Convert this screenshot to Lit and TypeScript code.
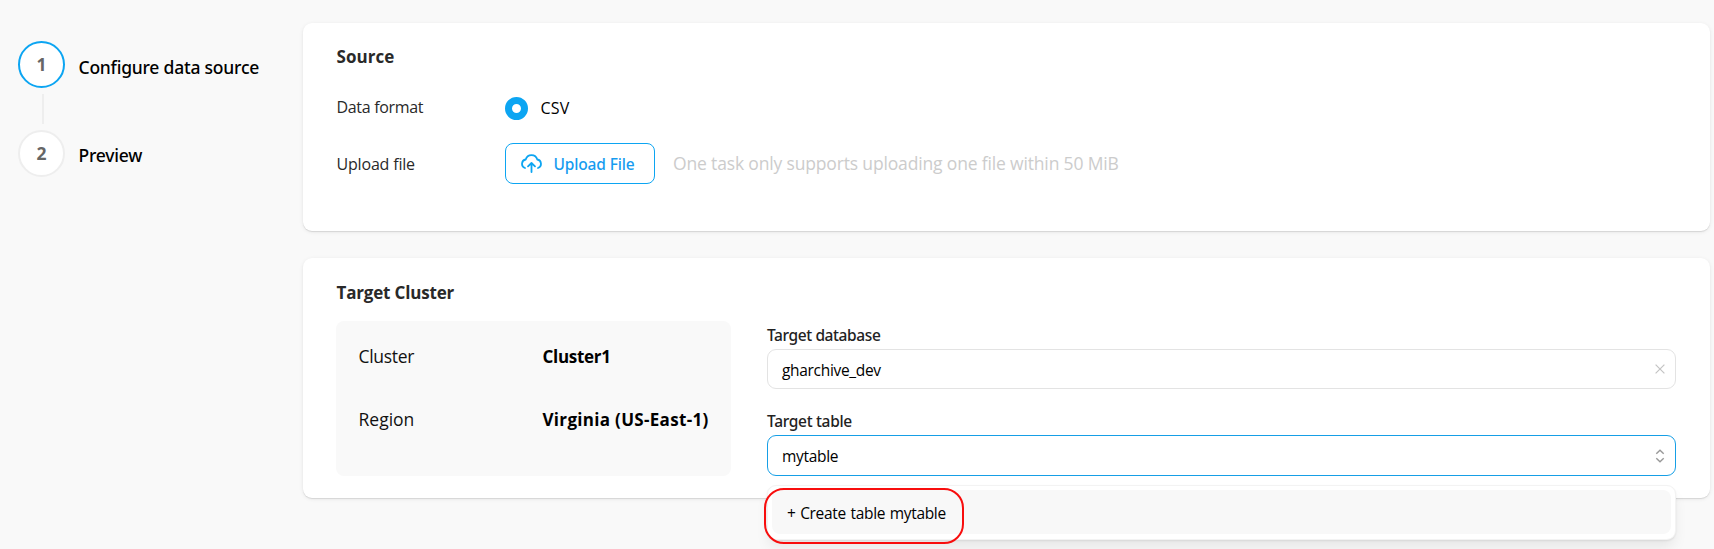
import { LitElement, html, css } from "lit";
import { customElement } from "lit/decorators.js";

@customElement("app-root")
export class AppRoot extends LitElement {
  static styles = css`
    * { box-sizing: border-box; }
    :host {
      display: flex;
      height: 549px;
      overflow: hidden;
      background: #f9f9f9;
      color: #000;
      font-family: "Open Sans", "Noto Sans", sans-serif;
      font-size: 16px;
      line-height: 24px;
      white-space: nowrap;
    }
    svg { display: block; flex: none; }

    .steps { width: 303px; flex: none; padding: 41px 0 0 18px; }
    .step { display: flex; align-items: center; height: 47px; font: 500 17.5px/24px "Noto Sans", sans-serif; }
    .step .label { padding: 5px 0 0 13.5px; letter-spacing: -0.22px; }
    .step.next .label { padding-top: 3px; }
    .num {
      width: 47px; height: 47px; flex: none; border: 2px solid #eee; border-radius: 50%;
      background: #fff; color: #666; display: grid; place-items: center; padding-bottom: 1px;
      font: 700 17.5px/24px "Open Sans", sans-serif;
    }
    .step.active .num { border-color: #0ca5f2; }
    .line { width: 2px; height: 30px; margin: 6px 0 6px 24px; background: #eee; }

    .main { width: 1407px; flex: none; padding-top: 23px; }
    .card {
      background: #fff; border-radius: 9px; padding: 0 34px 0 33px;
      box-shadow: 0 1px 1px rgba(0, 0, 0, 0.1), 0 1px 4px rgba(0, 0, 0, 0.08);
    }
    .source { height: 208px; margin-bottom: 27px; padding-top: 22px; }
    .target { height: 240px; padding-top: 23px; }
    .title { font-size: 17px; font-weight: 700; color: #292929; padding-left: 0.5px; }
    .title.src { letter-spacing: 0.05px; }
    .title.tgt { letter-spacing: -0.18px; }

    .row { display: flex; align-items: center; }
    .row .name { width: 169px; color: #292929; padding-left: 0.5px; }
    .format { height: 24px; margin-top: 27px; }
    .format .name { letter-spacing: -0.32px; margin-top: -2px; }
    .radio { width: 23px; height: 23px; border: 7px solid #0ca5f2; border-radius: 50%; background: #fff; }
    .csv { margin-left: 12.5px; letter-spacing: 0.2px; }
    .upload { height: 41px; margin-top: 23px; }
    .upload .name { letter-spacing: -0.18px; padding-top: 1px; }
    .btn {
      width: 150px; height: 41px; border: 1px solid #0ca5f2; border-radius: 8px;
      display: flex; align-items: center; padding-left: 14.5px; color: #169cf0;
      font: 500 15.5px/24px "Noto Sans", sans-serif; letter-spacing: -0.15px;
    }
    .btn svg { margin-top: -1px; }
    .btn span { margin: 1px 0 0 12px; }
    .hint { margin-left: 18px; color: #ccc; font-size: 17.5px; letter-spacing: -0.16px; margin-top: -1px; }

    .cols { display: flex; margin-top: 16px; }
    .info {
      width: 395px; height: 155px; flex: none; border-radius: 8px; background: #f9f9f9;
      padding: 23px 0 0 22.5px; font-size: 17.5px;
    }
    .pair { display: flex; height: 24px; margin-bottom: 39px; }
    .pair .key { width: 184px; color: #111; }
    .pair .key.c { letter-spacing: -0.3px; }
    .pair b { font-weight: 700; font-size: 17px; padding-top: 1px; }
    .pair b.c { letter-spacing: -0.3px; }
    .pair b.r { letter-spacing: 0.31px; }

    .form { width: 909px; margin-left: 36px; padding-top: 4px; position: relative; }
    .lab { font: 500 15.5px/20px "Noto Sans", sans-serif; height: 24px; color: #222; letter-spacing: -0.4px; }
    .lab.t { letter-spacing: -0.32px; margin-top: 22px; }
    .input {
      height: 40px; border: 1px solid #e3e3e3; border-radius: 9px; background: #fff;
      display: flex; align-items: center; justify-content: space-between;
      font-size: 15.5px; padding: 2px 10.5px 0 14px; letter-spacing: -0.32px;
    }
    .input svg { margin-top: -2px; }
    .input.focus { height: 41px; border-color: #169fe6; padding-top: 0; letter-spacing: -0.3px; }
    .input.focus svg { margin-top: 0; }
    .menu {
      position: absolute; left: 0; top: 164px; width: 909px; height: 55px;
      border: 1px solid #f3f3f3; border-radius: 9px; background: #fff; padding: 4px;
      box-shadow: 0 1px 2px rgba(0, 0, 0, 0.08), 0 9px 14px -2px rgba(0, 0, 0, 0.08);
    }
    .option {
      height: 44px; border-radius: 8px; background: #f8f8f8; padding: 11px 0 0 15px;
      font-size: 15.5px; letter-spacing: -0.32px; word-spacing: 0.9px;
    }
    .mark {
      position: absolute; left: -3px; top: 167px; width: 200px; height: 56px;
      border: 2px solid #f80d0d; border-radius: 20px;
    }
  `;

  render() {
    return html`
      <nav class="steps">
        <div class="step active"><div class="num">1</div><div class="label">Configure data source</div></div>
        <div class="line"></div>
        <div class="step next"><div class="num">2</div><div class="label">Preview</div></div>
      </nav>
      <main class="main">
        <section class="card source">
          <div class="title src">Source</div>
          <div class="row format">
            <div class="name">Data format</div>
            <div class="radio"></div>
            <div class="csv">CSV</div>
          </div>
          <div class="row upload">
            <div class="name">Upload file</div>
            <div class="btn">
              <svg width="21" height="20" viewBox="0 0 21 20" fill="none" stroke="#0ca5f2" stroke-width="1.8" stroke-linecap="round" stroke-linejoin="round">
                <path d="M4 15A4.4 4.4 0 0 1 4.7 6.5A6 6 0 0 1 16.3 6.5A4.4 4.4 0 0 1 17 15" />
                <path d="M10.5 19V10.4M7 13.4L10.5 10L14 13.4" />
              </svg>
              <span>Upload File</span>
            </div>
            <div class="hint">One task only supports uploading one file within 50 MiB</div>
          </div>
        </section>
        <section class="card target">
          <div class="title tgt">Target Cluster</div>
          <div class="cols">
            <div class="info">
              <div class="pair"><span class="key c">Cluster</span><b class="c">Cluster1</b></div>
              <div class="pair"><span class="key">Region</span><b class="r">Virginia (US-East-1)</b></div>
            </div>
            <div class="form">
              <div class="lab">Target database</div>
              <div class="input">
                <span>gharchive_dev</span>
                <svg width="10" height="10" viewBox="0 0 10 10" fill="none" stroke="#c4c4c4" stroke-width="1.2"><path d="M0.6 0.6L9.4 9.4M9.4 0.6L0.6 9.4" /></svg>
              </div>
              <div class="lab t">Target table</div>
              <div class="input focus">
                <span>mytable</span>
                <svg width="10" height="14" viewBox="0 0 10 14" fill="none" stroke="#999" stroke-width="1.4"><path d="M1.3 4.8L5 1.2L8.7 4.8M1.3 9.2L5 12.8L8.7 9.2" /></svg>
              </div>
              <div class="menu"><div class="option">+ Create table mytable</div></div>
              <div class="mark"></div>
            </div>
          </div>
        </section>
      </main>
    `;
  }
}
